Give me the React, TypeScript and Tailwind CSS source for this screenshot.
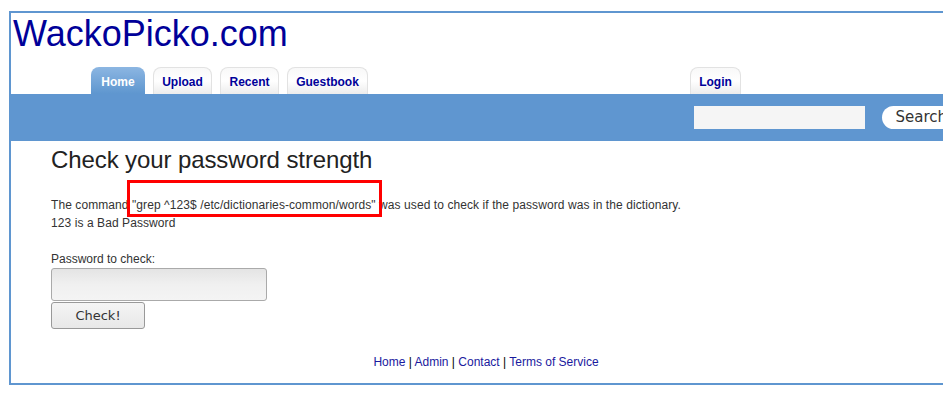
import React from "react";

const tabs = [
  { label: "Home", w: "w-[54px]", active: true },
  { label: "Upload", w: "w-[59px]", active: false },
  { label: "Recent", w: "w-[59px]", active: false },
  { label: "Guestbook", w: "w-[81px]", active: false },
];

function Tab({ label, w, active }: { label: string; w: string; active: boolean }) {
  return (
    <div
      className={
        active
          ? `${w} h-[27px] pt-[2px] rounded-t-[8px] bg-gradient-to-b from-[#8cb6e2] to-[#5e96cf] flex items-center justify-center text-[12px] font-bold text-white`
          : `${w} h-[27px] pt-[2px] rounded-t-[8px] border border-b-0 border-[#e2e2e2] bg-gradient-to-b from-[#f8f8f8] via-[#ffffff] to-[#ececec] flex items-center justify-center text-[12px] font-bold text-[#000099]`
      }
    >
      {label}
    </div>
  );
}

export default function App() {
  return (
    <div
      className="relative w-[943px] h-[415px] overflow-hidden bg-white"
      style={{ fontFamily: '"Liberation Sans", Arial, sans-serif' }}
    >
      <div className="ml-[9px] mt-[11px] w-[954px] border-2 border-[#5f96d0]">
        <div className="pl-[2px] text-[36px] leading-[41px] text-[#000099]">WackoPicko.com</div>
        <div className="mt-[13px] flex items-end pl-[80px]">
          <div className="flex gap-[8px]">
            {tabs.map((t) => (
              <Tab key={t.label} {...t} />
            ))}
          </div>
          <div className="ml-[322px]">
            <Tab label="Login" w="w-[51px]" active={false} />
          </div>
        </div>
        <div className="h-[47px] bg-[#5f96d0] flex items-center pl-[683px]">
          <div className="w-[172px] h-[23px] bg-[#f5f5f5]" />
          <div
            className="ml-[17px] h-[23px] w-[80px] rounded-full bg-white flex items-center pl-[14px] text-[15px] text-[#333] leading-none"
            style={{ fontFamily: '"DejaVu Sans", sans-serif' }}
          >
            Search
          </div>
        </div>
        <div className="pl-[40px] pb-[12px]">
          <h1 className="mt-[5px] text-[24px] leading-[28px] tracking-[-0.1px] text-[#222]">Check your password strength</h1>
          <p className="mt-[22px] text-[12px] leading-[18px] tracking-[0.08px] text-[#333]">
            The command "grep ^123$ /etc/dictionaries-common/words" was used to check if the password was in the dictionary.
            <br />
            123 is a Bad Password
          </p>
          <div className="mt-[18px] text-[12px] leading-[18px] text-[#333]">Password to check:</div>
          <div className="w-[216px] h-[33px] rounded-[3px] border border-[#aaaaaa] bg-gradient-to-b from-[#e4e4e4] via-[#f0f0f0] to-[#f4f4f4]" />
          <div
            className="mt-[1px] w-[94px] h-[27px] rounded-[3px] border border-[#999] bg-gradient-to-b from-[#f4f4f4] to-[#e8e8e8] flex items-center justify-center text-[13px] text-[#333]"
            style={{ fontFamily: '"DejaVu Sans", sans-serif' }}
          >
            Check!
          </div>
          <div className="mt-[24px] -ml-[40px] text-center text-[12px] leading-[18px] text-black">
            <a className="text-[#1a1a9e]">Home</a> | <a className="text-[#1a1a9e]">Admin</a> |{" "}
            <a className="text-[#1a1a9e]">Contact</a> | <a className="text-[#1a1a9e]">Terms of Service</a>
          </div>
        </div>
      </div>
      <div className="absolute left-[127px] top-[180px] w-[255px] h-[37px] border-[3px] border-[#ff0000]" />
    </div>
  );
}
